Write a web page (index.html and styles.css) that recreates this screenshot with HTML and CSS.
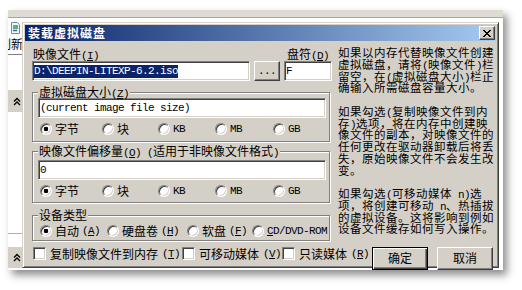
FILE: index.html
```html
<!DOCTYPE html>
<html lang="zh-CN">
<head>
<meta charset="utf-8">
<title>装载虚拟磁盘</title>
<link rel="stylesheet" href="styles.css">
</head>
<body>
<div class="bgwin">
  <div class="bg-toolbar"></div>
  <div class="bg-side">
    <svg class="bg-icon" width="9" height="12" viewBox="0 0 9 12">
      <path d="M0.5 0.5h6l2 2v9h-8z" fill="#eef4fb" stroke="#6a8cb0"/>
      <path d="M2 4h5M2 6h5" stroke="#3a9a3a" stroke-width="1.4"/>
      <path d="M2 8.5h4" stroke="#2b5fb5" stroke-width="1.4"/>
    </svg>
    <div class="bg-refresh">刷新</div>
    <div class="bg-rule"></div>
    <div class="bg-panel">
      <svg class="chev" width="8" height="9" viewBox="0 0 8 9"><path d="M1 4.5L4 1.5L7 4.5M1 8L4 5L7 8" fill="none" stroke="#000" stroke-width="1.3"/></svg>
    </div>
    <div class="bg-rule bg-rule-low"></div>
    <div class="bg-panel bg-panel-b">
      <svg class="chev" width="8" height="9" viewBox="0 0 8 9"><path d="M1 4.5L4 1.5L7 4.5M1 8L4 5L7 8" fill="none" stroke="#000" stroke-width="1.3"/></svg>
    </div>
  </div>

  <div class="dialog">
    <div class="titlebar">
      <span class="title">装载虚拟磁盘</span>
      <span class="btn close">
        <svg width="8" height="7" viewBox="0 0 8 7" shape-rendering="crispEdges"><path d="M0 0h2v1h-2zM6 0h2v1h-2zM1 1h2v1h-2zM5 1h2v1h-2zM2 2h4v1h-4zM3 3h2v1h-2zM2 4h4v1h-4zM1 5h2v1h-2zM5 5h2v1h-2zM0 6h2v1h-2zM6 6h2v1h-2z" fill="#000"/></svg>
      </span>
    </div>
    <div class="content">
      <div class="left">
        <div class="file-grid">
          <div class="lbl lbl-file">映像文件<span class="m">(<u>I</u>)</span></div>
          <div></div>
          <div class="lbl lbl-drive">盘符<span class="m">(<u>D</u>)</span></div>
          <div class="edit"><span class="m sel">D:\DEEPIN-LITEXP-6.2.iso</span></div>
          <div class="btn browse"><span class="m">...</span></div>
          <div class="edit"><span class="m">F</span></div>
        </div>

        <fieldset class="group g1">
          <legend>虚拟磁盘大小<span class="m">(<u>Z</u>)</span></legend>
          <div class="edit"><span class="m">(current image file size)</span></div>
          <div class="opts">
            <div class="opt"><span class="radio on"></span>字节</div>
            <div class="opt"><span class="radio"></span>块</div>
            <div class="opt"><span class="radio"></span><span class="m">KB</span></div>
            <div class="opt"><span class="radio"></span><span class="m">MB</span></div>
            <div class="opt"><span class="radio"></span><span class="m">GB</span></div>
          </div>
        </fieldset>

        <fieldset class="group g2">
          <legend>映像文件偏移量<span class="m">(<u>O</u>) (</span>适用于非映像文件格式<span class="m">)</span></legend>
          <div class="edit"><span class="m">0</span></div>
          <div class="opts">
            <div class="opt"><span class="radio on"></span>字节</div>
            <div class="opt"><span class="radio"></span>块</div>
            <div class="opt"><span class="radio"></span><span class="m">KB</span></div>
            <div class="opt"><span class="radio"></span><span class="m">MB</span></div>
            <div class="opt"><span class="radio"></span><span class="m">GB</span></div>
          </div>
        </fieldset>

        <fieldset class="group g3">
          <legend>设备类型</legend>
          <div class="opts opts3">
            <div class="opt"><span class="radio on"></span>自动<span class="m">(<u>A</u>)</span></div>
            <div class="opt"><span class="radio"></span>硬盘卷<span class="m">(<u>H</u>)</span></div>
            <div class="opt"><span class="radio"></span>软盘<span class="m">(<u>F</u>)</span></div>
            <div class="opt"><span class="radio"></span><span class="m"><u>C</u>D/DVD-ROM</span></div>
          </div>
        </fieldset>

        <div class="checks">
          <div class="chk"><span class="box"></span>复制映像文件到内存<span class="m">(<u>T</u>)</span></div>
          <div class="chk"><span class="box"></span>可移动媒体<span class="m">(<u>V</u>)</span></div>
          <div class="chk"><span class="box"></span>只读媒体<span class="m">(<u>R</u>)</span></div>
        </div>
      </div>

      <div class="right">
        <p class="help">如果以内存代替映像文件创建<br>虚拟磁盘，请将<span class="m">(</span>映像文件<span class="m">)</span>栏<br>留空，在<span class="m">(</span>虚拟磁盘大小<span class="m">)</span>栏正<br>确输入所需磁盘容量大小。</p>
        <p class="help">如果勾选<span class="m">(</span>复制映像文件到内<br>存<span class="m">)</span>选项，将在内存中创建映<br>像文件的副本，对映像文件的<br>任何更改在驱动器卸载后将丢<br>失，原始映像文件不会发生改<br>变。</p>
        <p class="help">如果勾选<span class="m">(</span>可移动媒体<span class="m"> n)</span>选<br>项，将创建可移动<span class="m"> n</span>、热插拔<br>的虚拟设备。这将影响到例如<br>设备文件缓存如何写入操作。</p>
        <div class="buttons">
          <div class="btn default">确定</div>
          <div class="btn">取消</div>
        </div>
      </div>
    </div>
  </div>
</div>
</body>
</html>
```

FILE: styles.css
```css
* { box-sizing: border-box; }

html, body {
  margin: 0;
  padding: 0;
  background: #fff;
}

body {
  font-family: "Noto Sans CJK SC", "Noto Sans", sans-serif;
  font-size: 12px;
  line-height: 12px;
  color: #000;
  width: 522px;
  height: 290px;
  overflow: hidden;
}

.m {
  font-family: "Liberation Mono", "DejaVu Sans Mono", monospace;
  font-size: 11px;
  line-height: 0;
  letter-spacing: -0.6px;
}

u { text-decoration: underline; text-underline-offset: 1px; }

/* background window */
.bgwin {
  position: relative;
  margin: 10px 0 0 8px;
  width: 495px;
  height: 260px;
  background: #fff;
  box-shadow: 4px 5px 8px rgba(0, 0, 0, 0.45);
}

.bg-toolbar {
  height: 8px;
  background: #dedbd4;
  border-bottom: 1px solid #a8a6a0;
}

.bg-side {
  width: 14px;
  overflow: hidden;
  display: flex;
  flex-direction: column;
  padding-top: 4px;
}

.bg-icon { margin-left: 3px; display: block; }

.bg-refresh {
  margin-top: 3px;
  margin-left: -9px;
  line-height: 13px;
  white-space: nowrap;
}

.bg-rule {
  margin-top: 4px;
  height: 1px;
  background: #808080;
}

.bg-panel {
  margin-top: 35px;
  height: 22px;
  background: #d4d0c8;
  display: flex;
  align-items: center;
  padding-left: 5px;
}

.bg-rule-low { margin-top: 121px; background: #b0aea8; }

.bg-panel-b { margin-top: 13px; height: 21px; }

.chev { display: block; }

/* dialog */
.dialog {
  position: absolute;
  left: 14px;
  top: 12px;
  width: 477px;
  height: 246px;
  background: #d4d0c8;
  border: 1px solid;
  border-color: #d4d0c8 #404040 #404040 #d4d0c8;
  box-shadow: inset 1px 1px #fff, inset -1px -1px #808080;
  padding: 2px;
  display: flex;
  flex-direction: column;
}

.titlebar {
  height: 16px;
  background: linear-gradient(to right, #0a246a, #a6caf0);
  display: flex;
  align-items: center;
  justify-content: space-between;
  padding: 0 1px 0 3px;
}

.title {
  color: #fff;
  font-weight: bold;
  letter-spacing: 1px;
  line-height: 12px;
}

.btn {
  background: #d4d0c8;
  border: 1px solid;
  border-color: #fff #404040 #404040 #fff;
  box-shadow: inset -1px -1px #808080;
  display: flex;
  align-items: center;
  justify-content: center;
}

.close {
  width: 16px;
  height: 14px;
}

.close svg { display: block; }

.content {
  flex: 1;
  display: grid;
  grid-template-columns: 300px 156px;
  column-gap: 6px;
  padding: 6px 2px 2px 7px;
  min-height: 0;
}

.left { padding-top: 1px; }

.file-grid {
  display: grid;
  grid-template-columns: 218px 26px 48px;
  grid-template-rows: 12px 20px;
  column-gap: 4px;
  row-gap: 1px;
}

.lbl { white-space: nowrap; }
.lbl-file { padding-left: 1px; }
.lbl-drive { padding-left: 3px; }

.edit {
  height: 20px;
  background: #fff;
  border: 1px solid;
  border-color: #808080 #fff #fff #808080;
  box-shadow: inset 1px 1px #404040, inset -1px -1px #d4d0c8;
  padding: 0 2px 0 1px;
  display: flex;
  align-items: center;
  overflow: hidden;
  white-space: nowrap;
}

.edit .m { line-height: 13px; }

.sel {
  background: #0a246a;
  color: #fff;
}

.browse { height: 20px; }
.browse .m { line-height: 12px; }

.group {
  margin: 5px 0 0;
  width: 298px;
  min-width: 0;
  border: 1px solid #808080;
  box-shadow: inset 1px 1px #fff, 1px 1px #fff;
  padding: 0 3px 6px 5px;
}

.group legend {
  padding: 0 1px;
  line-height: 12px;
  height: 12px;
  background: #d4d0c8;
  white-space: nowrap;
}

.g2 { margin-top: 3px; padding-top: 3px; padding-bottom: 5px; }
.g3 { margin-top: 6px; padding-top: 3px; padding-bottom: 3px; }

.opts {
  margin-top: 4px;
  height: 13px;
  display: grid;
  grid-template-columns: 62px 56px 57px 58px auto;
  padding-left: 2px;
}

.opts3 {
  margin-top: 0;
  grid-template-columns: 67px 80px 65px auto;
}

.opt {
  display: flex;
  align-items: center;
  gap: 3px;
  white-space: nowrap;
}

.opt .m, .chk .m { line-height: 12px; }

.radio {
  flex: none;
  width: 12px;
  height: 12px;
  border-radius: 50%;
  border: 1px solid;
  border-color: #808080 #fff #fff #808080;
  box-shadow: inset 1px 1px #404040, inset -1px -1px #d4d0c8;
  background: #fff;
}

.radio.on {
  background: radial-gradient(circle at center, #000 0 2px, #fff 2.6px);
}

.checks {
  margin-top: 6px;
  height: 13px;
  display: grid;
  grid-template-columns: 149px 100px auto;
  padding-left: 1px;
}

.chk {
  display: flex;
  align-items: center;
  gap: 4px;
  white-space: nowrap;
}

.box {
  flex: none;
  width: 13px;
  height: 13px;
  background: #fff;
  border: 1px solid;
  border-color: #808080 #fff #fff #808080;
  box-shadow: inset 1px 1px #404040, inset -1px -1px #d4d0c8;
}

.right {
  margin-top: 0;
  display: flex;
  flex-direction: column;
  min-height: 0;
}

.help {
  margin: 0 0 11.75px;
  font-size: 11.5px;
  letter-spacing: 0.5px;
  line-height: 11.75px;
  white-space: nowrap;
}

.help .m { letter-spacing: -0.6px; }

.buttons {
  margin-top: auto;
  display: flex;
  justify-content: flex-end;
  gap: 9px;
  padding-right: 1px;
}

.buttons .btn {
  width: 56px;
  height: 23px;
}

.buttons .default {
  border-color: #000;
  box-shadow: inset 1px 1px #fff, inset -1px -1px #404040, inset -2px -2px #808080;
}
```
